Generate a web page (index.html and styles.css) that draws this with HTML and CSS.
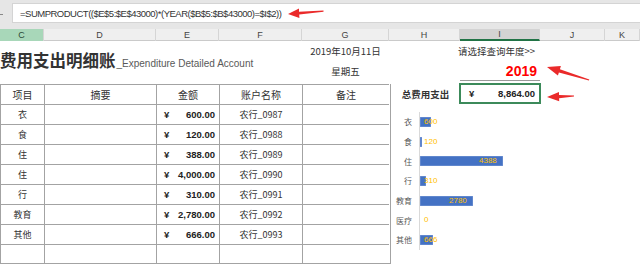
FILE: index.html
```html
<!DOCTYPE html>
<html lang="zh">
<head>
<meta charset="utf-8">
<title>费用支出明细账</title>
<link rel="stylesheet" href="styles.css">
</head>
<body>
<div class="formula-bar">
  <div class="fx-stub"></div>
  <div class="formula-box"><span class="formula">=SUMPRODUCT(($E$5:$E$43000)*(YEAR($B$5:$B$43000)=$I$2))</span></div>
</div>
<div class="col-headers">
  <div class="ch sel">C</div>
  <div class="ch">D</div>
  <div class="ch">E</div>
  <div class="ch">F</div>
  <div class="ch">G</div>
  <div class="ch">H</div>
  <div class="ch active">I</div>
  <div class="ch">J</div>
  <div class="ch">K</div>
</div>
<div class="sheet">
  <div class="title-cell"><span class="title-cn">费用支出明细账</span><span class="title-en">_Expenditure Detailed Account</span></div>
  <div class="date">2019年10月11日</div>
  <div class="weekday">星期五</div>
  <div class="prompt">请选择查询年度&gt;&gt;</div>
  <div class="year">2019</div>

  <div class="ledger">
    <div class="cell head">项目</div><div class="cell head">摘要</div><div class="cell head">金额</div><div class="cell head">账户名称</div><div class="cell head">备注</div>

    <div class="cell">衣</div><div class="cell"></div><div class="cell money"><span>¥</span><span>600.00</span></div><div class="cell">农行_0987</div><div class="cell"></div>
    <div class="cell">食</div><div class="cell"></div><div class="cell money"><span>¥</span><span>120.00</span></div><div class="cell">农行_0988</div><div class="cell"></div>
    <div class="cell">住</div><div class="cell"></div><div class="cell money"><span>¥</span><span>388.00</span></div><div class="cell">农行_0989</div><div class="cell"></div>
    <div class="cell">住</div><div class="cell"></div><div class="cell money"><span>¥</span><span>4,000.00</span></div><div class="cell">农行_0990</div><div class="cell"></div>
    <div class="cell">行</div><div class="cell"></div><div class="cell money"><span>¥</span><span>310.00</span></div><div class="cell">农行_0991</div><div class="cell"></div>
    <div class="cell">教育</div><div class="cell"></div><div class="cell money"><span>¥</span><span>2,780.00</span></div><div class="cell">农行_0992</div><div class="cell"></div>
    <div class="cell">其他</div><div class="cell"></div><div class="cell money"><span>¥</span><span>666.00</span></div><div class="cell">农行_0993</div><div class="cell"></div>
    <div class="cell"></div><div class="cell"></div><div class="cell"></div><div class="cell"></div><div class="cell"></div>
  </div>

  <div class="total-label">总费用支出</div>
  <div class="total-box"><span>¥</span><span>8,864.00</span></div>

  <div class="chart">
    <div class="cat">衣</div><div class="plot"><div class="bar" style="width:11.3px"></div><span class="val" style="left:4px">600</span></div>
    <div class="cat">食</div><div class="plot"><div class="bar" style="width:2.3px"></div><span class="val" style="left:4px">120</span></div>
    <div class="cat">住</div><div class="plot"><div class="bar" style="width:83px"></div><span class="val" style="left:59px">4388</span></div>
    <div class="cat">行</div><div class="plot"><div class="bar" style="width:5.9px"></div><span class="val" style="left:4px">310</span></div>
    <div class="cat">教育</div><div class="plot"><div class="bar" style="width:52.6px"></div><span class="val" style="left:29px">2780</span></div>
    <div class="cat">医疗</div><div class="plot"><div class="bar" style="width:0px"></div><span class="val" style="left:4px">0</span></div>
    <div class="cat">其他</div><div class="plot"><div class="bar" style="width:12.6px"></div><span class="val" style="left:4px">666</span></div>
  </div>
</div>

<svg class="annotations" width="640" height="266" viewBox="0 0 640 266" aria-hidden="true">
  <polygon points="288,14 299,8.4 299,11.8 323.5,10.4 323.5,11.7 299.2,14.6 299.4,18" />
  <polygon points="547,67 560.9,66.1 559.9,69.3 589.3,79.4 588.9,80.6 558.9,72.4 557.9,75.6" />
  <polygon points="547,97 559,92 559,95.1 574,95.4 574,96.6 559.1,98.2 559.2,101.3" />
</svg>
</body>
</html>
```

FILE: styles.css
```css
:root {
  --cols: 44px 112px 63px 83px 87px 71px 80px 65px 35px;
}

body {
  margin: 0;
  width: 640px;
  height: 266px;
  overflow: hidden;
  background: #fff;
  font-family: "Noto Sans CJK SC", sans-serif;
  color: #333;
  position: relative;
}

/* formula bar */
.formula-bar {
  height: 29px;
  box-sizing: border-box;
  padding-top: 3px;
  background: #e6e6e6;
  display: flex;
  align-items: flex-start;
}

.fx-stub {
  width: 12px;
  height: 20px;
  position: relative;
}

.fx-stub::before {
  content: "";
  display: block;
  width: 3px;
  height: 1px;
  margin-top: 11px;
  background: #888;
}

.formula-box {
  flex: 1;
  height: 20px;
  box-sizing: border-box;
  background: #fff;
  border: 1px solid #d4d4d4;
  border-right: none;
  display: flex;
  align-items: center;
  padding-left: 7px;
}

.formula {
  font-family: "Liberation Sans", sans-serif;
  font-size: 9.5px;
  letter-spacing: -0.5px;
  color: #333;
}

/* column headers */
.col-headers {
  display: grid;
  grid-template-columns: var(--cols);
  height: 11px;
  background: #efefef;
  border-bottom: 1px solid #cacaca;
}

.ch {
  font-family: "Liberation Sans", sans-serif;
  font-size: 9px;
  color: #444;
  display: flex;
  align-items: center;
  justify-content: center;
  border-right: 1px solid #d5d5d5;
  box-sizing: border-box;
}

.ch.sel {
  background: #a8d7b9;
  color: #2b4a37;
}

.ch.active {
  background: #d3d3d3;
  border-bottom: 2px solid #217346;
}

/* sheet */
.sheet {
  display: grid;
  grid-template-columns: var(--cols);
  grid-template-rows: 20px 20px 3px repeat(9, 20px);
}

.title-cell {
  grid-column: 1 / 5;
  grid-row: 1 / 3;
  display: flex;
  align-items: baseline;
  padding-top: 11px;
  white-space: nowrap;
}

.title-cn {
  font-size: 16.5px;
  font-weight: bold;
  line-height: 17px;
  color: #333;
}

.title-en {
  font-family: "Liberation Sans", sans-serif;
  font-size: 10px;
  color: #595959;
  margin-left: 1px;
}

.date {
  grid-column: 5;
  grid-row: 1;
  font-size: 9.5px;
  display: flex;
  align-items: center;
  justify-content: center;
  white-space: nowrap;
}

.weekday {
  grid-column: 5;
  grid-row: 2;
  font-size: 9.5px;
  display: flex;
  align-items: center;
  justify-content: center;
}

.prompt {
  grid-column: 7 / 9;
  grid-row: 1;
  font-size: 9.5px;
  display: flex;
  align-items: center;
  margin-left: -2px;
  white-space: nowrap;
}

.year {
  grid-column: 7;
  grid-row: 2;
  font-family: "Liberation Sans", sans-serif;
  font-size: 14px;
  font-weight: bold;
  color: #ff0000;
  display: flex;
  align-items: center;
  justify-content: flex-end;
  padding-right: 3px;
  border-bottom: 1px solid #9a9a9a;
}

/* ledger table */
.ledger {
  grid-column: 1 / 6;
  grid-row: 4 / 13;
  width: 390px;
  display: grid;
  grid-template-columns: 44px 112px 63px 83px 87px;
  grid-template-rows: repeat(9, 20px);
  border-right: 1px solid #a3a3a3;
  border-bottom: 1px solid #a3a3a3;
  box-sizing: content-box;
}

.cell {
  box-sizing: border-box;
  border-left: 1px solid #a3a3a3;
  border-top: 1px solid #a3a3a3;
  font-size: 9px;
  color: #333;
  display: flex;
  align-items: center;
  justify-content: center;
  white-space: nowrap;
}

.cell.head {
  font-size: 10px;
}

.cell.money {
  justify-content: space-between;
  padding: 0 4px 0 7px;
  font-family: "Liberation Sans", sans-serif;
  font-weight: bold;
  font-size: 9.5px;
  color: #222;
}

/* totals */
.total-label {
  grid-column: 6;
  grid-row: 4;
  font-size: 9.5px;
  font-weight: bold;
  display: flex;
  align-items: center;
  justify-content: center;
  padding-left: 2px;
}

.total-box {
  grid-column: 7;
  grid-row: 4;
  margin: -1px 0 0 -1px;
  height: 21px;
  width: 82px;
  box-sizing: border-box;
  border: 2px solid #3c8a5a;
  display: flex;
  align-items: center;
  justify-content: space-between;
  padding: 0 4px 0 8px;
  font-family: "Liberation Sans", sans-serif;
  font-weight: bold;
  font-size: 9.5px;
  color: #222;
}

/* chart */
.chart {
  grid-column: 6 / 8;
  grid-row: 5 / 13;
  padding-top: 8px;
  display: grid;
  grid-template-columns: 30px 1fr;
  grid-template-rows: repeat(7, 19.7px);
  align-content: start;
}

.cat {
  font-size: 8px;
  color: #595959;
  display: flex;
  align-items: center;
  justify-content: flex-end;
  padding-right: 7px;
  white-space: nowrap;
}

.plot {
  position: relative;
  border-left: 1px solid #d9d9d9;
  display: flex;
  align-items: center;
}

.bar {
  height: 10px;
  background: #4472c4;
  box-shadow: inset 0 0 0 0.5px #7d9bd6;
}

.val {
  position: absolute;
  top: 50%;
  transform: translateY(-50%);
  font-family: "Liberation Sans", sans-serif;
  font-size: 8px;
  color: #ffc000;
  line-height: 1;
}

/* annotation arrows */
.annotations {
  position: absolute;
  left: 0;
  top: 0;
  pointer-events: none;
}

.annotations polygon {
  fill: #ea2a2a;
}
```
